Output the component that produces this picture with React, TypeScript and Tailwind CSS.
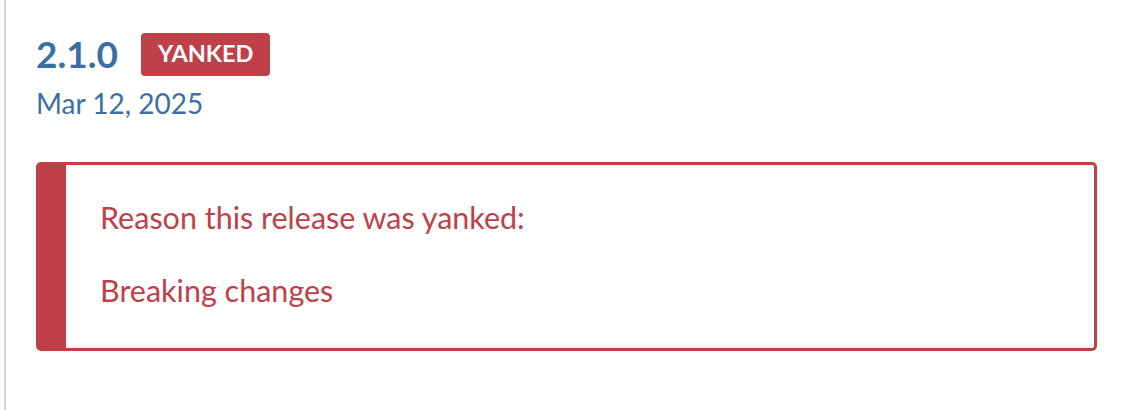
export default function App() {
    return <div className="min-h-screen bg-white pl-[4px]" style={{ fontFamily: "Lato, 'Noto Sans', sans-serif" }}>
        <div className="flex flex-col border-l-[2px] border-[#d6d6d6] min-h-[410px] pl-[30px] pr-[30px] pt-[28px]">
            <div className="flex items-center gap-[23px]">
                <span className="text-[37px] leading-[52px] font-bold text-[#3c6ea6]">2.1.0</span>
                <span className="flex items-center h-[43px] px-[17px] rounded-[4px] bg-[#bf4048] text-white text-[23.5px] font-bold">YANKED</span>
            </div>
            <p className="mt-[5px] text-[28px] leading-[36px] text-[#3c6ea6]">Mar 12, 2025</p>
            <div className="mt-[41px] flex flex-col border-[3px] border-l-[30px] border-[#bf4048] rounded-[5px] pl-[34px] pt-[34px] pb-[40px] text-[30.5px] leading-[36px] text-[#bf4048]">
                <p>Reason this release was yanked:</p>
                <p className="mt-[37px]">Breaking changes</p>
            </div>
        </div>
    </div>
}
